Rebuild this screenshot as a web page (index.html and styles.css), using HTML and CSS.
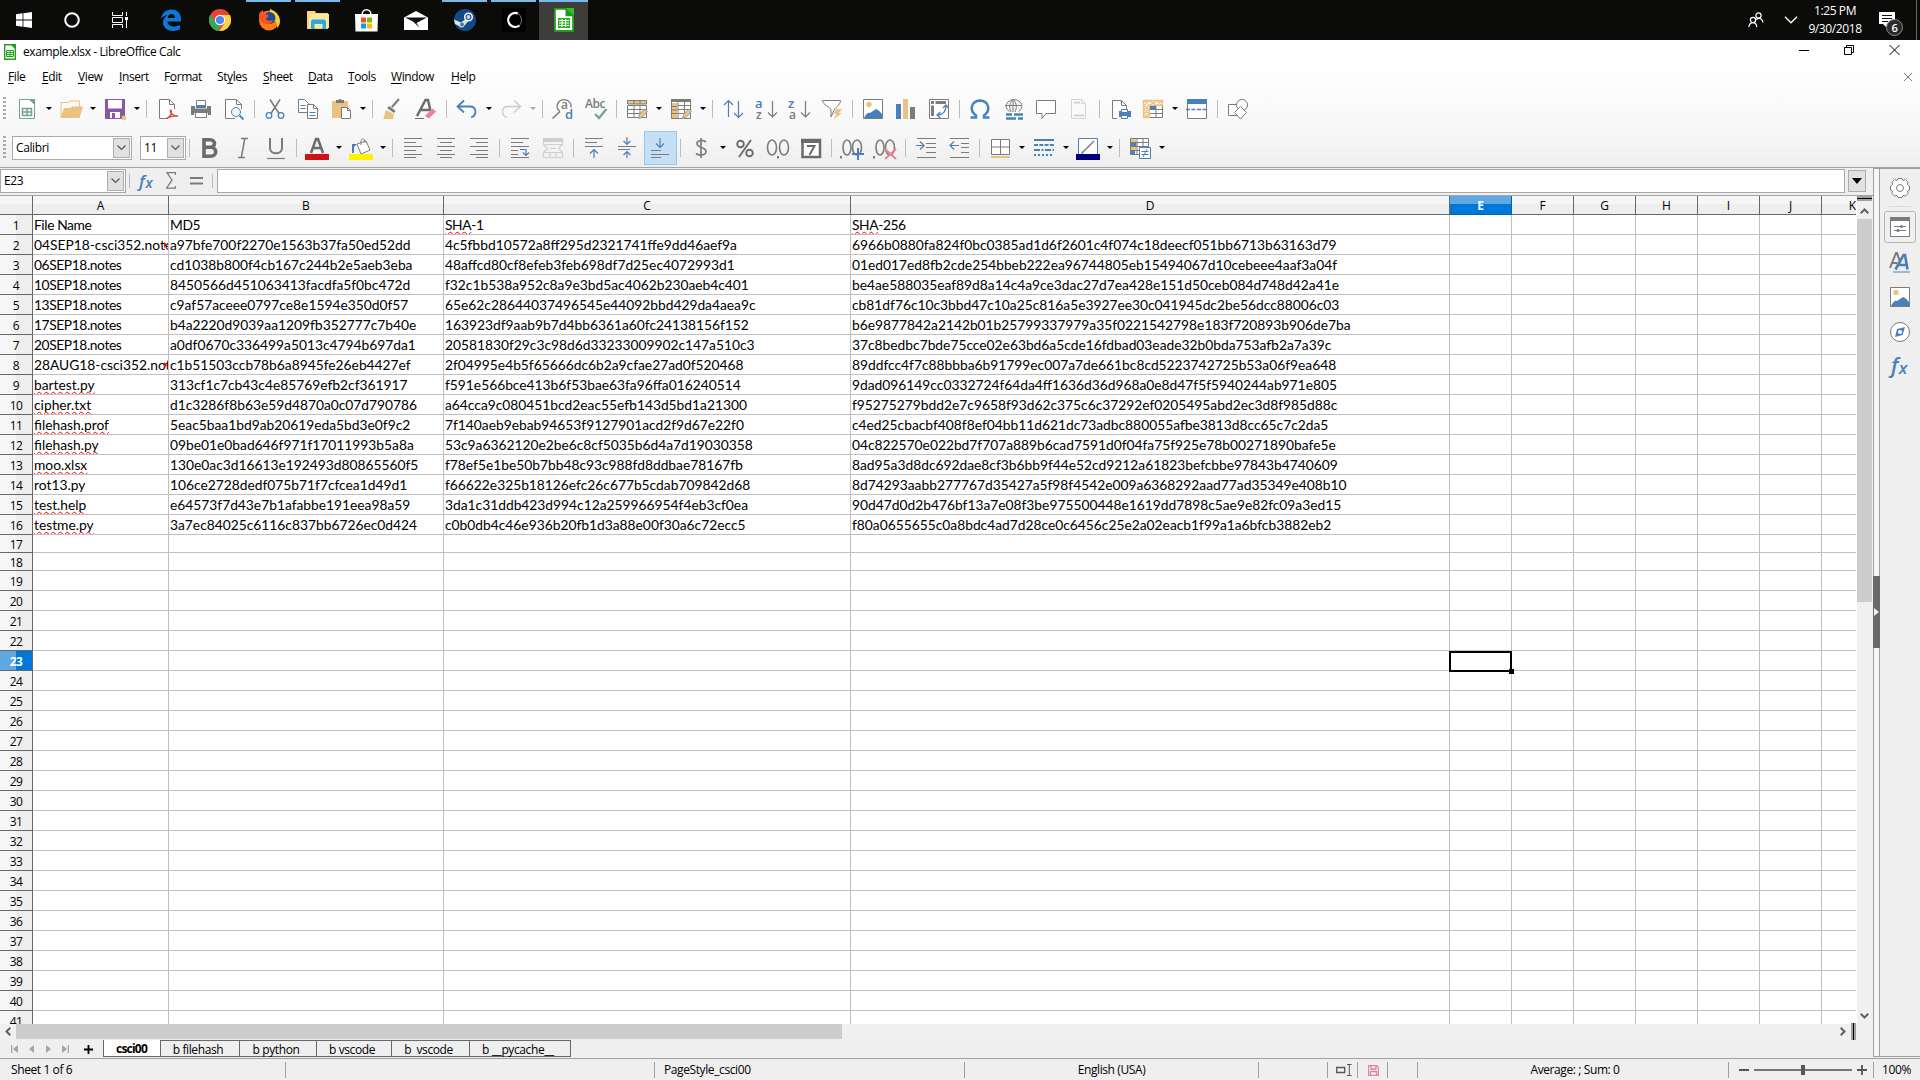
FILE: index.html
```html
<!DOCTYPE html>
<html lang="en">
<head>
<meta charset="utf-8">
<title>example.xlsx - LibreOffice Calc</title>
<link rel="stylesheet" href="styles.css">
</head>
<body>
<header class="taskbar">
  <div class="task sys"><svg width="16" height="16" viewBox="0 0 16 16" fill="#fff"><path d="M0 2.3 6.6 1.3v6.2H0zM7.4 1.2 16 0v7.5H7.4zM0 8.4h6.6v6.3L0 13.7zM7.4 8.4H16V16l-8.6-1.2z"/></svg></div>
  <div class="task sys"><svg width="16" height="16" viewBox="0 0 16 16"><circle cx="8" cy="8" r="6.8" fill="none" stroke="#fff" stroke-width="2"/></svg></div>
  <div class="task sys"><svg width="18" height="16" viewBox="0 0 18 16" fill="none" stroke="#fff"><path d="M1.5 0v3.5h10V0M1.5 16v-3.5h10V16M1.5 5.5h10v5h-10zM15.5 0v4M15.5 8v8"/><path d="M14 5h3v3h-3z" fill="#fff" stroke="none"/></svg></div>
  <div class="task gap"><svg width="22" height="22" viewBox="0 0 22 22"><path d="M1 10C2 4 6 .5 11.5 .5 18 .5 21 5 21 10v2.5H7.5c.3 3.500 3 5 6.500 5 2.500 0 4.500-.6 6-1.500v4.300c-2 1.100-4.500 1.600-7 1.600C7 21.900 3 18.500 3 13.500c0-3 1.600-5.700 4.600-7.400C4.500 6.500 2.300 8 1 10zm6.600-1h7.300c0-2.500-1.200-4-3.400-4-2.300 0-3.600 1.700-3.900 4z" fill="#0b78d7"/></svg></div>
  <div class="task"><svg width="22" height="22" viewBox="0 0 22 22"><circle cx="11" cy="11" r="11" fill="#e94335"/><path d="M1.500 5.500 7 14l4 2-1 6A11 11 0 0 1 1.500 5.500z" fill="#34a853"/><path d="M11 6h9.800A11 11 0 0 1 10.400 22l5-8z" fill="#fdd23e"/><circle cx="11" cy="11" r="5.200" fill="#fff"/><circle cx="11" cy="11" r="4.100" fill="#4a89f3"/></svg></div>
  <div class="task open"><svg width="22" height="22" viewBox="0 0 22 22"><circle cx="11" cy="11.500" r="10" fill="#ff7a16"/><path d="M12 0c5 1.500 10 6 10 12 0 3-1 5-3 7 1-7-3-8-7-12z" fill="#ffcf2e"/><circle cx="11.500" cy="9" r="6" fill="#1b4b9b"/><path d="M1 5c2-3 3-3 4-4 0 3 2 4 5 5 1 2-2 3-2 4 1 2 4 2 7 1-1 4-6 5-9 3C1 13 1 8 1 5z" fill="#f9531e"/></svg></div>
  <div class="task open"><svg width="22" height="20" viewBox="0 0 22 20"><path d="M0 1h8l1 2h12v16H0z" fill="#f7d675"/><path d="M2 4h20v14H2z" fill="#fde69a"/><path d="M4 19v-8l1.500-1.500h12L19 11v8h-3.500v-5h-8v5z" fill="#2aa9e4"/></svg></div>
  <div class="task"><svg width="23" height="23" viewBox="0 0 23 23"><path d="M7 6c0-7 9-7 9 0" fill="none" stroke="#fff" stroke-width="1.500"/><path d="M0 5h23l-.5 17.500H.5z" fill="#fff"/><path d="M6 8.500h5v5H6z" fill="#f25022"/><path d="M12 8.500h5v5h-5z" fill="#7fba00"/><path d="M6 14.500h5v5H6z" fill="#00a4ef"/><path d="M12 14.500h5v5h-5z" fill="#ffb900"/></svg></div>
  <div class="task"><svg width="24" height="19" viewBox="0 0 24 19"><path d="M0 6.500 12 0l12 6.500V19H0z" fill="#fff"/><path d="M1 6.500h22L12.500 12l3 4.500L9 10.500z" fill="#111"/></svg></div>
  <div class="task open"><svg width="22" height="22" viewBox="0 0 22 22"><circle cx="11" cy="11" r="11" fill="#124a84"/><circle cx="14.500" cy="8" r="3.800" fill="none" stroke="#fff" stroke-width="1.500"/><circle cx="14.500" cy="8" r="2" fill="#c9d8e6"/><path d="M0 10.500 7 13.500l4-3 3 2-3.500 4a3 3 0 0 1-5.500.5l-4-2z" fill="#dbe5ef"/><circle cx="8" cy="15.500" r="2" fill="#52789e"/></svg></div>
  <div class="task open"><svg width="24" height="24" viewBox="0 0 24 24"><path d="M0 0h24v24H0z" fill="#000"/><path d="M16 5.500a7 7 0 1 0 1.500 12" fill="none" stroke="#fff" stroke-width="2.200"/><path d="M16 5.500a8 8 0 0 1 1.500 12" fill="none" stroke="#777" stroke-width="1"/></svg></div>
  <div class="task open active"><svg width="20" height="24" viewBox="0 0 20 24"><path d="M0 0h13l7 7v17H0z" fill="#1f9a1a"/><path d="M1.800 1.800h9.700v6.500h6.700V22H1.800z" fill="#fff"/><path d="M12 0h8v8z" fill="#31c02b"/><path d="M4 10h12v10H4z" fill="#2bb024"/><path d="M5 12.500h10M5 15h10M5 17.500h10M8 11v8M11.500 11v8" stroke="#fff"/></svg></div>
  <div class="tray">
    <svg class="people" width="16" height="16" viewBox="0 0 16 16" fill="none" stroke="#fff" stroke-width="1.200"><circle cx="10.500" cy="3.500" r="2.600"/><circle cx="5" cy="8" r="2.600"/><path d="M.8 15c.5-3 2-4.300 4.200-4.300S8.500 12 8.800 15M8 7.500c3.500-2.500 6.500-.5 7 3"/></svg>
    <svg class="chev" width="14" height="8" viewBox="0 0 14 8" fill="none" stroke="#fff" stroke-width="1.300"><path d="m1 .8 6 6 6-6"/></svg>
    <div class="clock"><span>1:25 PM</span><span>9/30/2018</span></div>
    <div class="notice"><svg width="16" height="16" viewBox="0 0 16 16"><path d="M0 0h16v12H8v4l-4-4H0z" fill="#fff"/><path d="M3 3.500h10M3 6.500h10M3 9.500h6" stroke="#111"/></svg><b class="badge">6</b></div>
    <i class="peek"></i>
  </div>
</header>

<section class="chrome">
  <div class="titlebar">
    <svg width="12" height="16" viewBox="0 0 12 16"><path d="M.7.700h7l3.600 3.600v11H.700z" fill="#fff" stroke="#22a01c" stroke-width="1.400"/><path d="M7 0h5v5z" fill="#22a01c"/><path d="M2.500 6.500h7v6h-7zM2.500 8.500h7M2.500 10.500h7M6 6.500v6" fill="none" stroke="#22a01c"/></svg>
    <span class="title">example.xlsx - LibreOffice Calc</span>
    <div class="winctl">
      <svg width="10" height="10" viewBox="0 0 10 10"><path d="M0 5.500h10" stroke="#000"/></svg>
      <svg width="10" height="10" viewBox="0 0 10 10" fill="none" stroke="#000"><path d="M.5 2.500h7v7h-7zM2.500 2.500v-2h7v7h-2"/></svg>
      <svg width="11" height="10" viewBox="0 0 11 10" stroke="#000"><path d="m.5 0 10 10M10.500 0l-10 10"/></svg>
    </div>
  </div>
  <nav class="menubar">
    <span><u>F</u>ile</span><span><u>E</u>dit</span><span><u>V</u>iew</span><span><u>I</u>nsert</span><span>F<u>o</u>rmat</span><span>St<u>y</u>les</span><span><u>S</u>heet</span><span><u>D</u>ata</span><span><u>T</u>ools</span><span><u>W</u>indow</span><span><u>H</u>elp</span>
    <svg class="docclose" width="8" height="8" viewBox="0 0 8 8" stroke="#777"><path d="m0 0 8 8M8 0 0 8"/></svg>
  </nav>

  <div class="toolbar">
    <i class="grip"></i>
    <svg class="ic" viewBox="0 0 24 24"><path d="M4.500 2.500h10l5 5v14h-15z" fill="#fff" stroke="#73a391"/><path d="M14 2h6v6z" fill="#73a391"/><path d="M7.500 11.500h9v7h-9zM7.500 15h9M12 11.500v7" fill="none" stroke="#73a391" stroke-width="1.500"/></svg><i class="car"></i>
    <svg class="ic" viewBox="0 0 24 24"><path d="M2 20V5.500h7L11 4h9.500v6" fill="none" stroke="#eac282"/><path d="M1.500 21 5 11h6l2-1.500h11L20.500 21z" fill="#eac282"/></svg><i class="car"></i>
    <svg class="ic" viewBox="0 0 24 24"><path d="M2 2h20v20H2z" fill="#8757a8"/><path d="M5 3h14v8.500H5zM7 15h10v6H7z" fill="#fff"/><path d="M9 16h3v5H9z" fill="#8757a8"/><circle cx="21" cy="21" r="2.400" fill="#eac282"/></svg><i class="car"></i>
    <i class="sep wide"></i>
    <svg class="ic" viewBox="0 0 24 24" fill="#fff" stroke="#7b7b7b"><path d="M12 21.500H3.500v-19h10l5 5V12M13.500 2.500v5h5"/><path d="M10.500 21.500c4-2 6-5 4.500-8.500-2 .5.500 6.500 7 6-4-.5-8.500.5-11.500 2.500" fill="none" stroke="#cf4a36" stroke-width="1.300"/></svg>
    <svg class="ic" viewBox="0 0 24 24"><path d="M7.500 3.500h9v5h-9z" fill="#fff" stroke="#7b7b7b"/><path d="M2 9h4v2.500h12V9h4v9h-3v-2H5v2H2z" fill="#7b7b7b"/><path d="M6.500 15.500h11v5h-11z" fill="#fff" stroke="#7b7b7b"/><path d="M7 8.500h10v2.500H7z" fill="#4a80b8"/></svg>
    <svg class="ic" viewBox="0 0 24 24" fill="#fff" stroke="#7b7b7b"><path d="M19.500 12V7.500l-5-5h-11v19H13M14.500 2.500v5h5"/><circle cx="14" cy="15" r="4.500" fill="#eef4fa" stroke="#4a80b8"/><path d="m17.500 18.500 4 4" stroke="#4a80b8" stroke-width="1.800"/></svg>
    <i class="sep"></i>
    <svg class="ic" viewBox="0 0 24 24" fill="none" stroke="#7b7b7b" stroke-width="1.500"><path d="m7 2.500 9 14M17 2.500l-9 14"/><circle cx="6" cy="18.500" r="2.800" stroke="#4a80b8" stroke-width="1.300"/><circle cx="18" cy="18.500" r="2.800" stroke="#4a80b8" stroke-width="1.300"/></svg>
    <svg class="ic" viewBox="0 0 24 24" fill="#fff" stroke="#7b7b7b"><path d="M2.500 2.500h6l4 4v9h-10z"/><path d="M4.500 8.500h5m-5 3h5" stroke="#4a80b8"/><path d="M11.500 7.500h6l4 4v10h-10zM17.500 7.500v4h4"/><path d="M13.500 15.500h6m-6 3h6" stroke="#4a80b8"/></svg>
    <svg class="ic" viewBox="0 0 24 24"><path d="M3 4h16v17H3z" fill="#eac282"/><path d="M7 3h2.500c0-1.500 3-1.500 3 0H15v3H7z" fill="#7b7b7b"/><path d="M12.500 10.500h6l3 3v8h-9z" fill="#fff" stroke="#7b7b7b"/><path d="M18.500 10.500v3h3" fill="none" stroke="#7b7b7b"/></svg><i class="car"></i>
    <i class="sep"></i>
    <svg class="ic" viewBox="0 0 24 24"><path d="m18 2-7 8" stroke="#7b7b7b" stroke-width="2"/><path d="m8.500 9 6 5-1.500 2-7-5z" fill="#7b7b7b"/><path d="m5 13 8 4-1 5H2c2-2 1-6 3-9z" fill="#eac282"/></svg>
    <svg class="ic" viewBox="0 0 24 24"><path d="M3 19 11.500 3h2.500l2.500 11M7 13h8.500" fill="none" stroke="#6b6b6b" stroke-width="2.500"/><path d="M1 21.500h9" stroke="#6b6b6b"/><path d="m11 19 7.500-7.500 3.500 3-7 7z" fill="#e5839a"/></svg>
    <i class="sep"></i>
    <svg class="ic" viewBox="0 0 24 24" fill="none" stroke="#4a80b8" stroke-width="1.800"><path d="m9 3.500-6.500 6L9 15.500M3 9.500h12c7 0 7 9 1 11"/></svg><i class="car"></i>
    <svg class="ic" viewBox="0 0 24 24" fill="none" stroke="#c9c9c9" stroke-width="1.300"><path d="m15 3.500 6.500 6-6.500 6M21 9.500H9c-7 0-7 9-1 11"/></svg><i class="car dim"></i>
    <i class="sep"></i>
    <svg class="ic" viewBox="0 0 24 24" fill="none" stroke="#7b7b7b" stroke-width="1.500"><path d="M9 14.500a7 6.500 0 1 1 11-4M9 14.500l-7.500 7"/><text x="10" y="12" class="ig">a</text><text x="14" y="22" class="ib">d</text></svg>
    <svg class="ic" viewBox="0 0 24 24"><text x="1" y="11" class="ig">Abc</text><path d="m11 17 4 4 7.500-9" fill="none" stroke="#73a391" stroke-width="2.200"/></svg>
    <i class="sep"></i>
    <svg class="ic" viewBox="0 0 24 24"><path d="M2.500 8.500h19v12h-19zM2.500 12.500h19m-19 4h19M9 8v12M15 8v12" fill="#fff" stroke="#7b7b7b"/><path d="M2.500 3.500h19v3.500h-19z" fill="#eac282" stroke="#7b7b7b"/><path d="M9 3.500v3.500M15 3.500v3.500" stroke="#7b7b7b"/><path d="m13.500 21.500 1-4 5-5.500 3 2.500-5.500 6z" fill="#eac282" stroke="#9a9a9a"/></svg><i class="car"></i>
    <svg class="ic" viewBox="0 0 24 24"><path d="M2.500 3.500h19v18h-19zM2.500 8.500h19m-19 4h19m-19 4h19M9 3v18M15.500 3v18" fill="#fff" stroke="#7b7b7b"/><path d="M2 2h20v3H2z" fill="#7b7b7b"/><path d="M3 6h5.500v15H3z" fill="#eac282"/><path d="M3 9.500h5M3 13h5M3 16.500h5" stroke="#7b7b7b"/><path d="m13.500 21.500 1-4 5-5.500 3 2.500-5.500 6z" fill="#eac282" stroke="#9a9a9a"/></svg><i class="car"></i>
    <i class="sep"></i>
    <svg class="ic" viewBox="0 0 24 24" fill="none" stroke="#4a80b8" stroke-width="1.200"><path d="M7.500 20V4M3 8l4.500-4.500L12 8M17.500 4v16M13 16l4.500 4.500L22 16"/></svg>
    <svg class="ic" viewBox="0 0 24 24"><text x="1" y="11" class="ib">a</text><text x="2" y="22" class="ig">z</text><path d="M18.500 4v16M14 15.500l4.500 4.500 4.500-4.500" fill="none" stroke="#7b7b7b" stroke-width="1.200"/></svg>
    <svg class="ic" viewBox="0 0 24 24"><text x="1" y="11" class="ib">z</text><text x="2" y="22" class="ig">a</text><path d="M18.500 4v16M14 15.500l4.500 4.500 4.500-4.500" fill="none" stroke="#7b7b7b" stroke-width="1.200"/></svg>
    <svg class="ic" viewBox="0 0 24 24"><path d="M2.500 3.500h18c0 5-6 7-6.500 10l-3 6.500V13c0-3-8.500-5-8.500-9.500z" fill="#fff" stroke="#7b7b7b"/><path d="m16 12 6 0-3 4h3l-8.500 6.500 3-5.500H14z" fill="#eac282"/></svg>
    <i class="sep"></i>
    <svg class="ic" viewBox="0 0 24 24"><path d="M2.500 2.500h19v19h-19z" fill="#fff" stroke="#7b7b7b"/><circle cx="8" cy="7.500" r="2.700" fill="#eac282"/><path d="M3 21c2-4 4-6 6-5l6-4c3 1 5 4 6 5v4z" fill="#4a80b8"/></svg>
    <svg class="ic" viewBox="0 0 24 24"><path d="M2 7h5v15H2z" fill="#4a80b8"/><path d="M9 2h5v20H9z" fill="#eac282"/><path d="M16 10h5v12h-5z" fill="#7b7b7b"/></svg>
    <svg class="ic" viewBox="0 0 24 24"><path d="M2.500 2.500h19v19h-19z" fill="#fff" stroke="#7b7b7b"/><path d="M4 4h3v3H4zM8.500 4H19v3H8.500zM4 8.500h3V19H4z" fill="#7b7b7b"/><path d="M11 18c5 0 8-4 8-9M16 11l3-3 2.500 3M13.500 15 10 18l3.500 3" fill="none" stroke="#4a80b8" stroke-width="1.300"/></svg>
    <i class="sep"></i>
    <svg class="ic" viewBox="0 0 24 24"><path d="M2.500 20.500H8v-2C1 13.500 3 4 12 3.500c9 .5 11 10 4 15v2h5.500" fill="none" stroke="#4a80b8" stroke-width="2.500"/></svg>
    <svg class="ic" viewBox="0 0 24 24" fill="none" stroke="#7b7b7b"><path d="M17.500 14.500a8 6.500 0 1 0-9 0M12 2.500C8 6 8 11 10 15M12 2.500c4 3.500 4 8.500 2 12.500M4 8.500h16M12 2v13"/><path d="M5 17.500h6m2 0h9M5 21.500h10m2 0h5" stroke="#4a80b8" stroke-width="2.500"/></svg>
    <svg class="ic" viewBox="0 0 24 24"><path d="M2.500 3.500h19v13H12l-4 5v-5H2.500z" fill="#fff" stroke="#7b7b7b"/></svg>
    <svg class="ic" viewBox="0 0 24 24" fill="#fafafa" stroke="#d3d3d3"><path d="M4.500 2.500h10l4 4v15h-14zM14.500 2.500v4h4"/><path d="M7 5.500h6M7 18.500h10" stroke-width="2"/></svg>
    <i class="sep"></i>
    <svg class="ic" viewBox="0 0 24 24" fill="#fff" stroke="#7b7b7b"><path d="M9 21.500H4.500v-18h9l5 5V13M13.500 3.500v5h5"/><path d="M11 14h12v6H11z" fill="#4a80b8" stroke="none"/><path d="M13.500 12.500h6v3h-6zM13.500 18.500h6v3h-6z" stroke="#4a80b8"/></svg>
    <svg class="ic" viewBox="0 0 24 24"><path d="M2.500 3.500h19v17h-19zM8.500 8.500v12M15 8.500v12M8.500 8.500h13M8.500 12.500h13M8.500 16.500h13" fill="#fff" stroke="#7b7b7b"/><path d="M2.500 3.500h19v5h-13v12h-6zM2.500 8.500l6-5 7 5 6-5M2.500 3.500l6 5 7-5 6 5M2.500 8.500l6 4-6 4 6 4M8.500 8.500l-6 4 6 4-6 4" fill="#fff7e8" stroke="#eac282" stroke-width="1.300"/><path d="M9 9h6v3.500H9z" fill="#4a80b8"/></svg><i class="car"></i>
    <svg class="ic" viewBox="0 0 24 24"><path d="M2.500 3.500h19v18h-19z" fill="#fff" stroke="#7b7b7b"/><path d="M2 2h20v5H2z" fill="#4a80b8"/><path d="M1 12.500h22" stroke="#4a80b8" stroke-width="1.500" stroke-dasharray="4 1.500"/></svg>
    <i class="sep"></i>
    <svg class="ic" viewBox="0 0 24 24" fill="#fff" stroke="#7b7b7b"><path d="M2.500 7.500h11v11h-11z"/><circle cx="16" cy="8" r="5.500"/><path d="m14.500 9.500 6 6-6 6.500-6-6.500z"/></svg>
  </div>

  <div class="toolbar fmt">
    <i class="grip"></i>
    <div class="combo font"><span>Calibri</span><b><svg width="9" height="6" viewBox="0 0 9 6"><path d="m.5.500 4 4 4-4" fill="none" stroke="#555" stroke-width="1.200"/></svg></b></div>
    <div class="combo size"><span>11</span><b><svg width="9" height="6" viewBox="0 0 9 6"><path d="m.5.500 4 4 4-4" fill="none" stroke="#555" stroke-width="1.200"/></svg></b></div>
    <i class="sep first"></i>
    <svg class="ic" viewBox="0 0 24 24" fill="none" stroke="#6b6b6b" stroke-width="3.600"><path d="M6 3.800h6c6 0 6 7.500 0 7.500H6h6.500c7 0 7 8.900 0 8.900H6z"/></svg>
    <svg class="ic" viewBox="0 0 24 24" fill="none" stroke="#7b7b7b" stroke-width="1.500"><path d="M10 2.500h7M7 21.500h7M13.800 2.500 10.300 21.500"/></svg>
    <svg class="ic" viewBox="0 0 24 24" fill="none" stroke="#7b7b7b" stroke-width="2"><path d="M6 2v10c0 7 12 7 12 0V2"/><path d="M3 22.500h18" stroke-width="1.200"/></svg>
    <i class="sep"></i>
    <svg class="ic" viewBox="0 0 24 24"><path d="m6 17 5-14h2l5 14M8 12h8" fill="none" stroke="#6b6b6b" stroke-width="2.500"/><path d="M0 18h24v6H0z" fill="#cd1118"/></svg><i class="car"></i>
    <svg class="ic" viewBox="0 0 24 24"><path d="m8 8 9-3 4 9-9 4z" fill="#fff" stroke="#7b7b7b"/><path d="M12 9c-1-8 4-8 4-2" fill="none" stroke="#7b7b7b"/><path d="M3 17V8h5l-3 3v6z" fill="#4a80b8"/><path d="M0 18h24v6H0z" fill="#fff200"/></svg><i class="car"></i>
    <i class="sep"></i>
    <svg class="ic ln" viewBox="0 0 24 24"><path d="M3 2.500h18M3 6.500h12M3 10.500h18M3 14.500h12M3 18.500h18M3 21.500h12"/></svg>
    <svg class="ic ln" viewBox="0 0 24 24"><path d="M3 2.500h18M6 6.500h12M3 10.500h18M6 14.500h12M3 18.500h18M6 21.500h12"/></svg>
    <svg class="ic ln" viewBox="0 0 24 24"><path d="M3 2.500h18M9 6.500h12M3 10.500h18M9 14.500h12M3 18.500h18M9 21.500h12"/></svg>
    <i class="sep"></i>
    <svg class="ic ln" viewBox="0 0 24 24"><path d="M3 2.500h18M3 6.500h12M3 10.500h18M3 14.500h7M3 18.500h7M3 21.500h18"/><path class="bl" d="M12 13.500h6v6M15 16.500l3 3 3-3"/></svg>
    <svg class="ic" viewBox="0 0 24 24" fill="none" stroke="#cfcfcf" stroke-width="1.200"><path d="M2.500 2.500h19v6h-19zM2.500 16.500h19v5h-19zM2.500 8.500l4 4-4 4M21.500 8.500l-4 4 4 4M9 12.500h6M9 17v5M15 17v5"/><path d="M3 3h18v2.500H3z" fill="#ccc"/></svg>
    <i class="sep"></i>
    <svg class="ic ln" viewBox="0 0 24 24"><path d="M3 2.500h18M3 6.500h12M3 10.500h18"/><path class="bl" d="M12 22v-8M8 17.500l4-4 4 4"/></svg>
    <svg class="ic ln" viewBox="0 0 24 24"><path d="M3 10.500h18M3 13.500h12"/><path class="bl" d="M12 1v7M8.500 5 12 8.500 15.500 5M12 22v-6M8.500 19l3.500-3.500 3.500 3.500"/></svg>
    <span class="hl"><svg class="ic ln" viewBox="0 0 24 24"><path d="M3 14.500h10M3 18.500h18M3 21.500h10"/><path class="bl" d="M12 2v9M8 7.500l4 4 4-4"/></svg></span>
    <i class="sep"></i>
    <svg class="ic" viewBox="0 0 24 24"><path d="M17 6c-3-2.500-9-2-9 1.500 0 5 9 3 9 8 0 4-7 4.500-10 2M12 2v20" fill="none" stroke="#7b7b7b" stroke-width="1.700"/></svg><i class="car"></i>
    <svg class="ic" viewBox="0 0 24 24" fill="none" stroke="#6b6b6b" stroke-width="1.900"><circle cx="7.500" cy="8" r="3.300"/><circle cx="16.500" cy="17" r="3.300"/><path d="m18 4-12 17"/></svg>
    <svg class="ic" viewBox="0 0 24 24" fill="none" stroke="#7b7b7b" stroke-width="1.600"><ellipse cx="6" cy="11.500" rx="4.500" ry="7.500"/><ellipse cx="18" cy="11.500" rx="4.500" ry="7.500"/><path d="M12 20v2.500" stroke-width="2"/></svg>
    <svg class="ic" viewBox="0 0 24 24"><path d="M3.500 4v17h17.500V4z" fill="#fff" stroke="#6b6b6b" stroke-width="2.500"/><path d="M2 3h20v4H2z" fill="#6b6b6b"/><path d="M8 10h7.500l-5 9" fill="none" stroke="#6b6b6b" stroke-width="2"/></svg>
    <i class="sep"></i>
    <svg class="ic" viewBox="0 0 24 24" fill="none" stroke="#7b7b7b" stroke-width="1.600"><ellipse cx="7" cy="11.500" rx="4" ry="7.500"/><ellipse cx="17" cy="11.500" rx="4.500" ry="7.500"/><path d="M1 20v2.500" stroke-width="2"/><path d="M18 12v12M12 18h12" stroke="#4a80b8" stroke-width="2"/></svg>
    <svg class="ic" viewBox="0 0 24 24" fill="none" stroke="#7b7b7b" stroke-width="1.600"><ellipse cx="7" cy="11.500" rx="4" ry="7.500"/><ellipse cx="17" cy="11.500" rx="4.500" ry="7.500"/><path d="M1 20v2.500" stroke-width="2"/><path d="m12 13 11 10M23 13 12 23" stroke="#e5839a" stroke-width="2"/></svg>
    <i class="sep"></i>
    <svg class="ic ln" viewBox="0 0 24 24"><path d="M3 2.500h19M12 7.500h10M12 11.500h10M12 16.500h10M3 21.500h19"/><path class="bl" d="M2 9.500h8M6 5.500l4 4-4 4"/></svg>
    <svg class="ic ln" viewBox="0 0 24 24"><path d="M3 2.500h19M14 7.500h8M14 11.500h8M14 16.500h8M3 21.500h19"/><path class="bl" d="M12 9.500H3M7 5.500l-4 4 4 4"/></svg>
    <i class="sep"></i>
    <svg class="ic" viewBox="0 0 24 24"><path d="M3.500 3.500h18v15h-18zM12.500 3.500v15M3.500 11h18" fill="#fff" stroke="#7b7b7b"/><path d="M3 20h19v2H3z" fill="#eac282"/></svg><i class="car"></i>
    <svg class="ic" viewBox="0 0 24 24" stroke="#4a80b8" stroke-width="2"><path d="M2 4h20"/><path d="M2 9h20" stroke-dasharray="4 1.300"/><path d="M2 14h20" stroke-dasharray="6 1.500 2 1.500"/><path d="M2 19h20" stroke-dasharray="2 2"/></svg><i class="car"></i>
    <svg class="ic" viewBox="0 0 24 24"><path d="M2.500 2.500h19v16h-19z" fill="#fff" stroke="#4a80b8"/><path d="M18 5 7 16" stroke="#7b7b7b" stroke-width="1.500"/><path d="m5 18 1-3 2 2z" fill="#4a80b8"/><path d="M0 18h24v6H0z" fill="#000080"/></svg><i class="car"></i>
    <i class="sep"></i>
    <svg class="ic" viewBox="0 0 24 24"><path d="M2.500 2.500h18v16h-18zM9 2.500v16M15 2.500v16M2.500 6.500h18M2.500 10.500h18M2.500 14.500h18" fill="#fff" stroke="#7b7b7b"/><path d="M3 3h5.500v3H3zM3 11h5.500v3H3z" fill="#eac282"/><path d="M3 7h5.500v3H3zM3 15h4v3H3z" fill="#4a80b8"/><path d="M11.500 11.500h11v11h-11zM13.500 15.500h7m-7 3h7M19 13l-4 8" fill="#fff" stroke="#4a80b8"/></svg><i class="car"></i>
  </div>
</section>

<div class="work">
  <main class="main">
    <div class="fbar">
      <div class="combo name"><span>E23</span><b><svg width="9" height="6" viewBox="0 0 9 6"><path d="m.5.500 4 4 4-4" fill="none" stroke="#555" stroke-width="1.200"/></svg></b></div>
      <i class="sep"></i>
      <span class="fx"><i>f</i><i class="x">x</i></span>
      <svg width="10" height="17" viewBox="0 0 10 17" fill="none" stroke="#7b7b7b" stroke-width="1.300"><path d="M9.500 3V.7H1l5 7.500-5.500 8h9V14"/></svg>
      <svg class="eq" width="13" height="8" viewBox="0 0 13 8" stroke="#7b7b7b" stroke-width="1.800"><path d="M0 1h13M0 6.500h13"/></svg>
      <i class="sep"></i>
      <div class="input"></div>
      <div class="drop"><i></i></div>
    </div>
    <div class="sheetwrap">
      <div class="sheet" id="sheet"></div>
      <div class="vscroll">
        <i class="split"></i>
        <svg width="9" height="6" viewBox="0 0 9 6"><path d="M.7 5.300 4.500 1.500l3.800 3.800" fill="none" stroke="#606060" stroke-width="2"/></svg>
        <i class="vthumb"></i>
        <svg class="down" width="9" height="6" viewBox="0 0 9 6"><path d="m.7.700 3.800 3.800L8.300.700" fill="none" stroke="#606060" stroke-width="2"/></svg>
      </div>
    </div>
    <div class="hscroll">
      <svg width="6" height="9" viewBox="0 0 6 9"><path d="M5.300.700 1.500 4.500l3.800 3.800" fill="none" stroke="#606060" stroke-width="2"/></svg>
      <i class="hthumb"></i>
      <svg class="right" width="6" height="9" viewBox="0 0 6 9"><path d="m.7.700 3.800 3.800L.7 8.300" fill="none" stroke="#606060" stroke-width="2"/></svg>
      <i class="hsplit"></i>
    </div>
    <div class="tabs">
      <div class="tabnav">
        <svg width="7" height="8" viewBox="0 0 7 8" fill="#a5a5a5"><path d="M0 0h1.300v8H0zM7 0v8L2 4z"/></svg>
        <svg width="7" height="8" viewBox="0 0 7 8" fill="#a5a5a5"><path d="M6 0v8L1 4z"/></svg>
        <svg width="7" height="8" viewBox="0 0 7 8" fill="#a5a5a5"><path d="M1 0v8l5-4z"/></svg>
        <svg width="7" height="8" viewBox="0 0 7 8" fill="#a5a5a5"><path d="M5.700 0H7v8H5.700zM0 0v8l5-4z"/></svg>
        <svg class="plus" width="9" height="9" viewBox="0 0 9 9"><path d="M4.500 0v9M0 4.500h9" stroke="#000" stroke-width="1.800"/></svg>
      </div>
      <span class="tab on">csci00</span><span class="tab">b filehash</span><span class="tab">b python</span><span class="tab">b vscode</span><span class="tab">b&nbsp; vscode</span><span class="tab">b __pycache__</span>
    </div>
  </main>
  <div class="splitter"><i><svg width="5" height="8" viewBox="0 0 5 8"><path d="M0 0v8l5-4z" fill="#f0f0f0"/></svg></i></div>
  <aside class="side">
    <svg viewBox="0 0 24 24" fill="#fff" stroke="#7b7b7b"><path d="M10 2.500h4l1 2 2.500-1L20 6l-.5 2.500 2 1.500v4l-2 1 .5 2.500-2.500 2.500-2.500-.5-1 2h-4l-1-2-2.500.5L4 17.500 4.500 15l-2-1v-4l2-1.500L4 6l2.500-2.500 2.500 1z"/><circle cx="12" cy="12" r="3.500"/></svg>
    <i class="rule"></i>
    <span class="sel"><svg viewBox="0 0 24 24"><path d="M2.500 3.500h19v18h-19z" fill="#fff" stroke="#7b7b7b"/><path d="M2 2h20v4H2z" fill="#7b7b7b"/><path d="M6 11.500h12M6 15.500h12" stroke="#7b7b7b"/><circle cx="13.500" cy="11.500" r="1.500" fill="#7b7b7b"/><circle cx="10" cy="15.500" r="1.500" fill="#4a80b8"/></svg></span>
    <svg viewBox="0 0 24 24" fill="none"><path d="M2 18 8 3h1l3 9M4.500 13h5" stroke="#7b7b7b" stroke-width="2"/><path d="m7.500 19.500 8-14.500h1.500l2.500 14.500M10 15h8" stroke="#4a80b8" stroke-width="2.600"/><path d="M5 22h17" stroke="#4a80b8"/></svg>
    <svg viewBox="0 0 24 24"><path d="M2.500 2.500h19v19h-19z" fill="#fff" stroke="#7b7b7b"/><circle cx="8" cy="7.500" r="2.700" fill="#eac282"/><path d="M3 21c2-4 4-6 6-5l6-4c3 1 5 4 6 5v4z" fill="#4a80b8"/></svg>
    <svg viewBox="0 0 24 24"><circle cx="12" cy="12" r="9.500" fill="#fff" stroke="#7b7b7b"/><path d="m17 7-2.500 8L7 17l2-8z" fill="#4a80b8"/><circle cx="12" cy="12" r="2" fill="#fff"/></svg>
    <span class="fx"><i>f</i><i class="x">x</i></span>
  </aside>
</div>

<footer class="status">
  <span class="s1">Sheet 1 of 6</span><span class="s2"></span><span class="s3">PageStyle_csci00</span><span class="s4">English (USA)</span><span class="s5"></span>
  <span class="s6"><svg width="16" height="12" viewBox="0 0 16 12" fill="none" stroke="#555"><path d="M.7 3.500h8v5h-8z" stroke-width="1.300"/><path d="M11 .5h4.500M11 11.500h4.500M13.300.5v11"/></svg></span>
  <span class="s6"><svg width="11" height="11" viewBox="0 0 11 11" fill="none" stroke="#e5839a"><path d="M.5.500h8l2 2v8H.500zM3 .500v3.500h5V.500M2.500 10.500v-4h6v4" stroke-width="1.300"/></svg></span>
  <span class="s6"></span><span class="s7">Average: ; Sum: 0</span>
  <span class="s8"><i class="minus"></i><i class="track"><i></i></i><svg width="10" height="10" viewBox="0 0 10 10"><path d="M5 0v10M0 5h10" stroke="#555" stroke-width="1.800"/></svg></span>
  <span class="s9">100%</span>
</footer>
<script src="sheet.js"></script>
</body>
</html>
```
FILE: styles.css
```css
*, *::before, *::after { box-sizing: border-box; }
body {
  margin: 0; width: 1920px; height: 1080px; overflow: hidden;
  display: flex; flex-direction: column;
  font: 12px "Open Sans", "Noto Sans", sans-serif; letter-spacing: -0.4px;
  color: #000; background: #efefef;
}
svg { display: block; flex: none; }
i { font-style: normal; }

.taskbar { height: 40px; background: #0b0b0a; display: flex; flex: none; }
.task { width: 49px; display: flex; align-items: center; justify-content: center; border-top: 2px solid transparent; padding-bottom: 2px; }
.task.sys { width: 48px; }
.task.gap { margin-left: 2px; }
.task.open { border-image: linear-gradient(90deg, transparent 4px, #76b9ed 4px, #76b9ed 45px, transparent 45px) 2; border-width: 2px 0 0; border-style: solid; }
.task.active { background: #3d3d3c; border-image: none; border-color: #76b9ed; margin-left: 1px; }
.tray { margin-left: auto; display: flex; align-items: center; color: #fff; }
.people { margin-right: 20px; }
.chev { margin-right: 10px; }
.clock { width: 54px; display: flex; flex-direction: column; align-items: center; line-height: 18px; white-space: nowrap; margin-right: 17px; }
.notice { position: relative; margin-right: 21px; }
.badge { position: absolute; left: 7px; top: 7px; width: 17px; height: 17px; border-radius: 9px; border: 1px solid #8a8a8a; background: #2b2b2b; font: 600 11px/15px "Open Sans", sans-serif; text-align: center; }
.peek { width: 4px; height: 40px; border-left: 1px solid #666; }

.chrome { height: 128px; flex: none; background: linear-gradient(#fff 15%, #f7f7f7 75%, #eee); border-bottom: 1px solid #a5a5a5; }
.titlebar { height: 24px; display: flex; align-items: center; padding-left: 4px; }
.title { margin-left: 7px; padding-bottom: 2px; }
.winctl { margin-left: auto; display: flex; gap: 35px; padding-right: 20px; padding-bottom: 4px; }
.menubar { height: 25px; display: grid; grid-template-columns: 34px 36px 41px 45px 53px 46px 45px 40px 43px 60px 1fr auto; align-items: center; padding: 0 8px 0 8px; }
.menubar u { text-underline-offset: 2px; }
.toolbar { height: 39px; display: flex; align-items: center; }
.toolbar.fmt { height: 39px; }
.grip { width: 3px; height: 24px; margin: 0 5px 0 3px; background: repeating-linear-gradient(#aaa 0 2px, transparent 2px 4px); }
.ic { width: 24px; height: 24px; margin: 0 5px 0 4px; overflow: visible; }
.toolbar .grip + .ic { margin-left: 4px; }
.ln { fill: none; stroke: #7b7b7b; stroke-width: 1; }
.bl { stroke: #4a80b8; stroke-width: 1.200; }
.ig, .ib { font: 600 12px "Open Sans", sans-serif; fill: #7b7b7b; stroke: none; letter-spacing: -0.5px; }
.ib { fill: #4a80b8; font-size: 13px; }
.car { width: 0; height: 0; border: 3px solid transparent; border-top: 3px solid #000; border-bottom: 0; margin: 0 3px 0 2px; }
.car.dim { border-top-color: #aaa; }
.sep { width: 1px; height: 18px; background: #bcbcbc; margin: 0 4px 0 3px; flex: none; }
.sep.wide { margin-right: 5px; }
.combo { display: flex; align-items: center; height: 24px; background: #fff; border: 1px solid #a9a9a9; padding: 0 1px 0 3px; flex: none; }
.combo b { width: 17px; height: 20px; margin-left: auto; background: #e1e1e1; border: 1px solid #adadad; display: flex; align-items: center; justify-content: center; }
.font { width: 120px; margin: 0 8px 0 1px; }
.size { width: 46px; }
.sep.first { margin-right: 4px; }
.hl { width: 33px; height: 34px; background: #c5e0f5; border: 1px solid #90c8f6; display: flex; align-items: center; }
.hl .ic { margin: 0 3px; }

.work { flex: 1; display: flex; min-height: 0; }
.main { width: 1873px; display: flex; flex-direction: column; }
.fbar { height: 28px; flex: none; display: flex; align-items: center; border-bottom: 1px solid #a5a5a5; padding-bottom: 2px; }
.name { width: 126px; }
.fbar .sep { height: 14px; }
.fx { width: 15px; color: #4a80b8; font: italic 600 17px/16px "Open Sans", sans-serif; display: flex; align-items: flex-end; }
.fx i { font-style: italic; }
.fx .x { font-size: 14px; line-height: 13px; margin-left: 1px; }
.fbar .fx { margin: 0 12px 0 5px; }
.fbar .eq { margin: 0 6px 0 14px; }
.input { flex: 1; height: 24px; background: #fff; border: 1px solid #a9a9a9; }
.drop { width: 18px; height: 22px; margin: 0 7px 0 3px; background: #e1e1e1; border: 1px solid #adadad; }
.drop i { display: block; margin: 7px 0 0 3px; width: 0; border: 5px solid transparent; border-top: 6px solid #000; border-bottom: 0; }

.sheetwrap { flex: 1; display: flex; min-height: 0; }
.sheet { width: 1857px; flex: none; overflow: hidden; background: #fff; border-right: 1px solid #fff; }
.row { display: grid; grid-template-columns: 33px 136px 275px 407px 599px repeat(6, 62px) 62px; width: 1884px; height: 20px; }
.row.short { height: 18px; }
.cell { position: relative; border-right: 1px solid #c0c0c0; border-bottom: 1px solid #c0c0c0; padding-left: 1px; font: 13.8px/20px Lato, Carlito, sans-serif; letter-spacing: 0; white-space: nowrap; overflow: hidden; }
.cell.tight { letter-spacing: -0.4px; }
.head { height: 19px; }
.head .cell, .cell.num { font: 12px/21px "Open Sans", sans-serif; text-align: center; padding: 0; border-color: #686868; }
.head .cell { background: linear-gradient(#f6f6f6 45%, #eee 45%); line-height: 20px; }
.cell.num { background: linear-gradient(90deg, #f6f6f6 50%, #eee 50%); letter-spacing: -0.6px; }
.short .cell.num { line-height: 19px; }
.head .cell.hot { background: linear-gradient(#5ea8e4 45%, #0078d7 45%); color: #fff; font-weight: 700; border-color: #0063b1; }
.cell.num.hot { background: linear-gradient(90deg, #5ea8e4 50%, #0078d7 50%); color: #fff; font-weight: 700; }
.cell u { text-decoration: underline wavy #f00 1px; text-underline-offset: 1px; text-decoration-skip-ink: none; }
.cell.over::after { content: ""; position: absolute; right: 1px; top: 7px; border: 3px solid transparent; border-left: 3px solid #e00; border-right: 0; }
.cell.cur { overflow: visible; }
.cell.cur::before { content: ""; position: absolute; left: -1px; top: 0; width: 63px; height: 21px; border: 2px solid #000; z-index: 1; }
.cell.cur::after { content: ""; position: absolute; right: -3px; bottom: -4px; width: 5px; height: 5px; background: #000; z-index: 2; }

.vscroll { width: 16px; display: flex; flex-direction: column; align-items: center; background: #f0f0f0; padding-right: 1px; }
.split { width: 15px; height: 5px; background: linear-gradient(#a0a0a0 2px, #000 2px, #000 3px, #a0a0a0 3px); margin-bottom: 7px; }
.vthumb { width: 15px; height: 383px; background: #cdcdcd; margin-top: 5px; }
.down { margin-top: auto; margin-bottom: 5px; }
.hscroll { height: 15px; flex: none; display: flex; align-items: center; background: #f0f0f0; padding: 0 17px 0 5px; }
.hthumb { width: 826px; height: 15px; background: #cdcdcd; margin-left: 5px; }
.right { margin-left: auto; margin-right: 5px; }
.hsplit { width: 5px; height: 17px; background: linear-gradient(90deg, #a0a0a0 2px, #000 2px, #000 3px, #a0a0a0 3px); }
.tabs { height: 18px; flex: none; display: flex; margin-top: 1px; }
.tabnav { width: 103px; display: flex; align-items: center; gap: 10px; padding: 0 0 0 11px; }
.plus { margin-left: 5px; }
.tab { height: 17px; line-height: 17px; text-align: center; border: 1px solid #686868; border-left: 0; padding-right: 4px; white-space: nowrap; }
.tab.on { width: 58px; background: #fff; border-left: 1px solid #686868; border-top: 0; font-weight: 700; letter-spacing: -0.8px; padding-right: 1px; }
.tab:nth-of-type(2) { width: 79px; }
.tab:nth-of-type(3) { width: 77px; }
.tab:nth-of-type(4) { width: 75px; }
.tab:nth-of-type(5) { width: 78px; }
.tab:nth-of-type(6) { width: 101px; }

.splitter { width: 7px; height: 889px; border: 1px solid #a0a0a0; background: #f7f7f7; }
.splitter i { display: flex; align-items: center; justify-content: center; width: 7px; height: 72px; margin: 407px 0 0 -1px; background: #696969; }
.side { flex: 1; height: 889px; display: flex; flex-direction: column; align-items: center; border-top: 1px solid #a0a0a0; border-bottom: 1px solid #a0a0a0; padding-top: 7px; }
.side svg { width: 24px; height: 24px; }
.rule { width: 22px; height: 1px; background: #d8d8d8; margin: 6px 0 4px; }
.sel { width: 32px; height: 32px; border: 1px solid #b5b5b5; border-radius: 3px; display: flex; align-items: center; justify-content: center; margin-bottom: 7px; }
.sel ~ svg { margin-bottom: 11px; }
.side .fx { width: 18px; font-size: 21px; line-height: 20px; }
.side .fx .x { font-size: 17px; line-height: 14px; }

.status { height: 22px; flex: none; border-top: 1px solid #a0a0a0; display: flex; align-items: center; padding-top: 1px; }
.status > span { height: 16px; line-height: 16px; border-right: 1px solid #a0a0a0; display: flex; align-items: center; justify-content: center; white-space: nowrap; }
.status .s1 { width: 286px; justify-content: flex-start; padding-left: 11px; }
.s2 { width: 369px; }
.status .s3 { width: 310px; justify-content: flex-start; padding-left: 9px; }
.s4 { width: 294px; }
.s5 { width: 69px; }
.s6 { width: 30px; padding-left: 2px; }
.s7 { width: 311px; padding-left: 4px; }
.s8 { width: 145px; gap: 5px; padding-left: 4px; }
.status .s9 { border: 0; padding-left: 8px; }
.minus { width: 10px; height: 2px; background: #555; }
.track { width: 98px; height: 2px; background: #777; display: flex; align-items: center; justify-content: center; }
.track i { width: 4px; height: 10px; background: #555; }
```
FILE: sheet.js
```js
const names = ['04SEP18-csci352.notes', '06SEP18.notes', '10SEP18.notes', '13SEP18.notes', '17SEP18.notes', '20SEP18.notes', '28AUG18-csci352.notes', '~bartest.py', '~cipher.txt', '~filehash.prof', '~filehash.py', '~moo.xlsx', 'rot13.py', '~test.help', '~testme.py'];
const md5 = ['a97bfe700f2270e1563b37fa50ed52dd', 'cd1038b800f4cb167c244b2e5aeb3eba', '8450566d451063413facdfa5f0bc472d', 'c9af57aceee0797ce8e1594e350d0f57', 'b4a2220d9039aa1209fb352777c7b40e', 'a0df0670c336499a5013c4794b697da1', 'c1b51503ccb78b6a8945fe26eb4427ef', '313cf1c7cb43c4e85769efb2cf361917', 'd1c3286f8b63e59d4870a0c07d790786', '5eac5baa1bd9ab20619eda5bd3e0f9c2', '09be01e0bad646f971f17011993b5a8a', '130e0ac3d16613e192493d80865560f5', '106ce2728dedf075b71f7cfcea1d49d1', 'e64573f7d43e7b1afabbe191eea98a59', '3a7ec84025c6116c837bb6726ec0d424'];
const sha1 = ['4c5fbbd10572a8ff295d2321741ffe9dd46aef9a', '48affcd80cf8efeb3feb698df7d25ec4072993d1', 'f32c1b538a952c8a9e3bd5ac4062b230aeb4c401', '65e62c28644037496545e44092bbd429da4aea9c', '163923df9aab9b7d4bb6361a60fc24138156f152', '20581830f29c3c98d6d33233009902c147a510c3', '2f04995e4b5f65666dc6b2a9cfae27ad0f520468', 'f591e566bce413b6f53bae63fa96ffa016240514', 'a64cca9c080451bcd2eac55efb143d5bd1a21300', '7f140aeb9ebab94653f9127901acd2f9d67e22f0', '53c9a6362120e2be6c8cf5035b6d4a7d19030358', 'f78ef5e1be50b7bb48c93c988fd8ddbae78167fb', 'f66622e325b18126efc26c677b5cdab709842d68', '3da1c31ddb423d994c12a259966954f4eb3cf0ea', 'c0b0db4c46e936b20fb1d3a88e00f30a6c72ecc5'];
const sha256 = ['6966b0880fa824f0bc0385ad1d6f2601c4f074c18deecf051bb6713b63163d79', '01ed017ed8fb2cde254bbeb222ea96744805eb15494067d10cebeee4aaf3a04f', 'be4ae588035eaf89d8a14c4a9ce3dac27d7ea428e151d50ceb084d748d42a41e', 'cb81df76c10c3bbd47c10a25c816a5e3927ee30c041945dc2be56dcc88006c03', 'b6e9877842a2142b01b25799337979a35f0221542798e183f720893b906de7ba', '37c8bedbc7bde75cce02e63bd6a5cde16fdbad03eade32b0bda753afb2a7a39c', '89ddfcc4f7c88bbba6b91799ec007a7de661bc8cd5223742725b53a06f9ea648', '9dad096149cc0332724f64da4ff1636d36d968a0e8d47f5f5940244ab971e805', 'f95275279bdd2e7c9658f93d62c375c6c37292ef0205495abd2ec3d8f985d88c', 'c4ed25cbacbf408f8ef04bb11d621dc73adbc880055afbe3813d8cc65c7c2da5', '04c822570e022bd7f707a889b6cad7591d0f04fa75f925e78b00271890bafe5e', '8ad95a3d8dc692dae8cf3b6bb9f44e52cd9212a61823befcbbe97843b4740609', '8d74293aabb277767d35427a5f98f4542e009a6368292aad77ad35349e408b10', '90d47d0d2b476bf13a7e08f3be975500448e1619dd7898c5ae9e82fc09a3ed15', 'f80a0655655c0a8bdc4ad7d28ce0c6456c25e2a02eacb1f99a1a6bfcb3882eb2'];
const cols = ['A', 'B', 'C', 'D', 'E', 'F', 'G', 'H', 'I', 'J', 'K'];

const cell = (html, cls = '') => `<div class="cell ${cls}">${html}</div>`;
let out = '<div class="row head">' + cell('') + cols.map(c => cell(c, c === 'E' ? 'hot' : '')).join('') + '</div>';
for (let r = 1; r <= 41; r++) {
  let text = [];
  if (r === 1) text = ['File Name', 'MD5', '<u>SHA</u>-1', '<u>SHA</u>-256'];
  else if (r <= 16) {
    const n = names[r - 2];
    text = [n[0] === '~' ? `<u>${n.slice(1)}</u>` : n, md5[r - 2], sha1[r - 2], sha256[r - 2]];
  }
  const classFor = i => {
    if (r === 23 && cols[i] === 'E') return 'cur';
    if (i === 0 && (r === 2 || r === 8)) return 'over';
    return r === 1 || (i === 0 && r < 8) ? 'tight' : '';
  };
  out += `<div class="row${r === 17 || r === 18 ? ' short' : ''}">` + cell(r, 'num' + (r === 23 ? ' hot' : '')) +
    cols.map((c, i) => cell(text[i] || '', classFor(i))).join('') + '</div>';
}
document.getElementById('sheet').innerHTML = out;
```
